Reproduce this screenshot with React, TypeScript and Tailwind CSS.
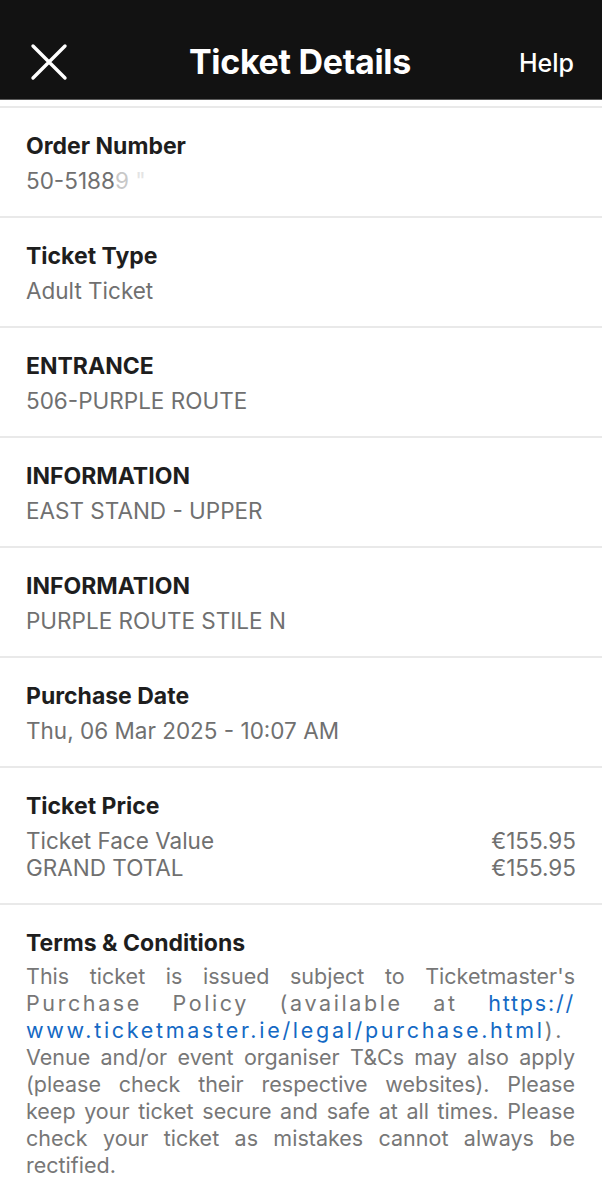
import React from "react";

const font = { fontFamily: "Inter, 'Noto Sans', 'Liberation Sans', sans-serif" };

function Row({ label, value }: { label: string; value: React.ReactNode }) {
  return (
    <div className="border-b-2 border-[#e9e9e9] px-[26px] pt-[24px] pb-[21px]">
      <div className="text-[23px] leading-[28px] font-bold text-[#1e1e1e] tracking-[0px]">{label}</div>
      <div className="mt-[7px] text-[22.5px] leading-[28px] text-[#707070]">{value}</div>
    </div>
  );
}

const J = "block whitespace-nowrap text-justify [text-align-last:justify]";

export default function App() {
  return (
    <div className="w-[602px] min-h-[1200px] bg-white" style={font}>
      <div className="h-[100px] bg-[#121212] border-b border-[#5a5a5a] flex items-center px-[30px] relative">
        <svg width="38" height="38" viewBox="0 0 38 38" className="mt-[24px]">
          <path d="M3 3 L35 35 M35 3 L3 35" stroke="white" strokeWidth="3.4" strokeLinecap="round" />
        </svg>
        <div className="flex-1 text-center text-white font-bold text-[34px] tracking-[-0.3px] mt-[24px] ml-[13px]">
          Ticket Details
        </div>
        <div className="text-white text-[25px] font-medium mt-[28px] mr-[-2px]">Help</div>
      </div>
      <div className="h-[8px] border-b-2 border-[#e9e9e9]" />
      <Row
        label="Order Number"
        value={
          <span>
            50-5188<span className="text-[#c8c8c8]">9</span>
            <span className="text-[#e4e4e4]"> "</span>
          </span>
        }
      />
      <Row label="Ticket Type" value="Adult Ticket" />
      <Row label="ENTRANCE" value="506-PURPLE ROUTE" />
      <Row label="INFORMATION" value="EAST STAND - UPPER" />
      <Row label="INFORMATION" value="PURPLE ROUTE STILE N" />
      <Row label="Purchase Date" value="Thu, 06 Mar 2025 - 10:07 AM" />
      <div className="border-b-2 border-[#e9e9e9] px-[26px] pt-[24px] pb-[22px]">
        <div className="text-[23px] leading-[28px] font-bold text-[#1e1e1e]">Ticket Price</div>
        <div className="mt-[7px] text-[22.5px] leading-[27px] text-[#707070]">
          <div className="flex justify-between">
            <span>Ticket Face Value</span>
            <span>€155.95</span>
          </div>
          <div className="flex justify-between">
            <span>GRAND TOTAL</span>
            <span>€155.95</span>
          </div>
        </div>
      </div>
      <div className="px-[26px] pr-[27px] pt-[24px] pb-[30px]">
        <div className="text-[23px] leading-[28px] font-bold text-[#1e1e1e]">Terms &amp; Conditions</div>
        <div className="mt-[6px] text-[21.5px] leading-[27px] text-[#777777]">
          <span className={J}>This ticket is issued subject to Ticketmaster's</span>
          <span className={J + " tracking-[2.6px]"}>
            Purchase Policy (available at <span className="text-[#1469c4] tracking-[1.8px]">https://</span>
          </span>
          <span className="block whitespace-nowrap tracking-[2.7px]">
            <span className="text-[#1469c4]">www.ticketmaster.ie/legal/purchase.html</span>).
          </span>
          <span className={J}>Venue and/or event organiser T&amp;Cs may also apply</span>
          <span className={J}>(please check their respective websites). Please</span>
          <span className={J}>keep your ticket secure and safe at all times. Please</span>
          <span className={J}>check your ticket as mistakes cannot always be</span>
          <span className="block">rectified.</span>
        </div>
      </div>
    </div>
  );
}
